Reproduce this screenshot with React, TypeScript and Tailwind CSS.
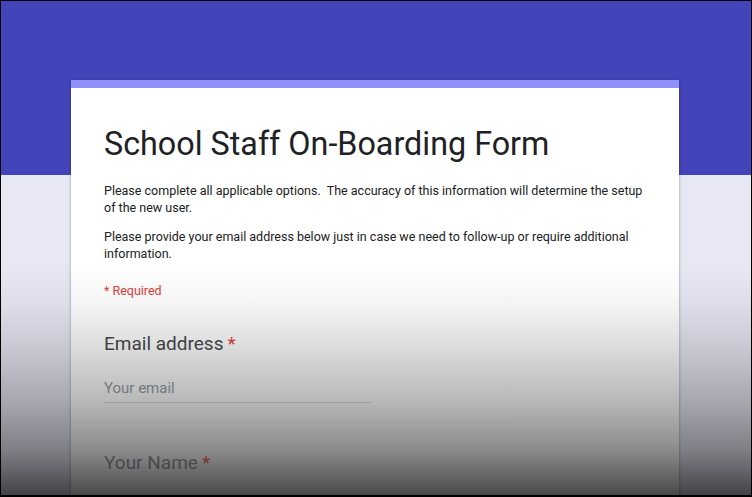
export default function App() {
  return (
    <div
      className="relative h-[497px] w-[752px] overflow-hidden border border-b-2 border-black bg-[linear-gradient(to_bottom,#4344b9_174px,#e8e8f5_174px)]"
      style={{ fontFamily: "Roboto, 'Noto Sans', sans-serif" }}
    >
      <div className="ml-[70px] mt-[79px] w-[608px] bg-white shadow-[0_1px_3px_rgba(0,0,0,0.35)]">
        <div className="h-[8px] bg-[#8f91fa]" />
        <div className="pl-[33px] pr-[28px] pt-[36px]">
          <h1 className="text-[32.3px] leading-[40px] text-[#202124]">
            School Staff On-Boarding Form
          </h1>
          <div className="mt-[18px] text-[12.5px] leading-[17px] text-[#202124]">
            <p>
              Please complete all applicable options.&nbsp; The accuracy of this information will
              determine the setup of the new user.
            </p>
            <p className="mt-[12px]">
              Please provide your email address below just in case we need to follow-up or require
              additional information.
            </p>
            <p className="mt-[20px] text-[#e2403a]">* Required</p>
          </div>

          <div className="mt-[33px]">
            <div className="text-[19px] leading-[24px] text-[#474a4e]">
              Email address<span className="ml-1 text-[#e2403a]">*</span>
            </div>
            <div className="mt-[22px] w-[267px] border-b border-[#dadce0] pb-[4px] text-[15px] leading-[20px] text-[#9aa0a6]">
              Your email
            </div>
          </div>

          <div className="mt-[48px] pb-[60px]">
            <div className="text-[19px] leading-[24px] text-[#9a9ca0]">
              Your Name<span className="ml-1 text-[#f07060]">*</span>
            </div>
          </div>
        </div>
      </div>

      <div className="pointer-events-none absolute inset-0 bg-[linear-gradient(to_bottom,rgba(0,0,0,0)_260px,rgba(0,0,0,0.04)_300px,rgba(0,0,0,0.12)_340px,rgba(0,0,0,0.28)_400px,rgba(0,0,0,0.46)_450px,rgba(0,0,0,0.73)_497px)]" />
    </div>
  );
}
